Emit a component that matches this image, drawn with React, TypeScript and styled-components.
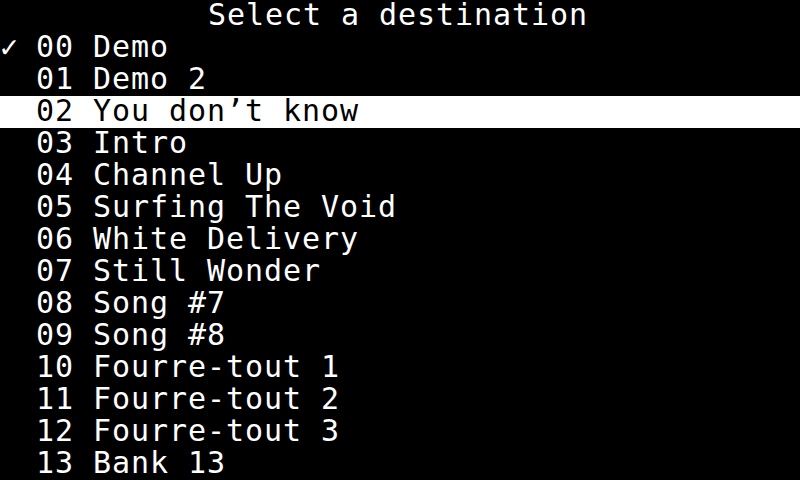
import styled, { createGlobalStyle } from "styled-components";

const GlobalStyle = createGlobalStyle`
    html, body {
        margin: 0;
        padding: 0;
        background: #000;
    }
`;

const Screen = styled.div`
    width: 800px;
    height: 480px;
    overflow: hidden;
    background: #000;
    color: #fff;
    font-family: "DejaVu Sans Mono", "Liberation Mono", monospace;
    font-size: 30px;
    letter-spacing: 0.94px;
    line-height: 30px;
    display: flex;
    flex-direction: column;
`;

const Title = styled.div`
    height: 32px;
    padding-right: 4px;
    text-align: center;
    white-space: pre;
`;

const Row = styled.div<{ selected?: boolean }>`
    height: 32px;
    display: flex;
    white-space: pre;
    background: ${(props) => (props.selected ? "#fff" : "#000")};
    color: ${(props) => (props.selected ? "#000" : "#fff")};
`;

const Mark = styled.span`
    width: 36px;
    flex-shrink: 0;
`;

interface IDestination {
    id: string;
    name: string;
}

const DESTINATIONS: IDestination[] = [
    { id: "00", name: "Demo" },
    { id: "01", name: "Demo 2" },
    { id: "02", name: "You don’t know" },
    { id: "03", name: "Intro" },
    { id: "04", name: "Channel Up" },
    { id: "05", name: "Surfing The Void" },
    { id: "06", name: "White Delivery" },
    { id: "07", name: "Still Wonder" },
    { id: "08", name: "Song #7" },
    { id: "09", name: "Song #8" },
    { id: "10", name: "Fourre-tout 1" },
    { id: "11", name: "Fourre-tout 2" },
    { id: "12", name: "Fourre-tout 3" },
    { id: "13", name: "Bank 13" },
];

const CURRENT = "00";
const CURSOR = "02";

const App = () => {
    return (
        <>
            <GlobalStyle />
            <Screen>
                <Title>Select a destination</Title>
                {DESTINATIONS.map((d) => (
                    <Row key={d.id} selected={d.id === CURSOR}>
                        <Mark>{d.id === CURRENT ? "✓" : ""}</Mark>
                        <span>{d.id} {d.name}</span>
                    </Row>
                ))}
            </Screen>
        </>
    );
};

export default App;
